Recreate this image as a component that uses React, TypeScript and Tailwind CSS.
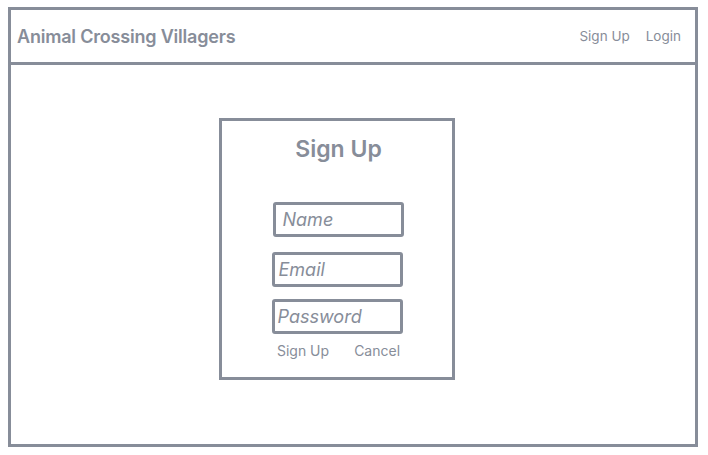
const Field = ({ label, offset }: { label: string; offset: string }) => (
    <div className={`w-[131px] h-[35px] border-[3px] border-[#878d99] rounded-[3px] flex items-center ${offset}`}>
        <span className="italic text-[18px] leading-none text-[#878d99]">{label}</span>
    </div>
);

export default function App() {
    return (
        <div className="w-[708px] h-[455px] bg-white pt-[7px] pl-[8px] font-['Inter',sans-serif] text-[#878d99]">
            <div className="w-[690px] h-[440px] border-[3px] border-[#878d99] flex flex-col">
                {/* Header */}
                <header className="h-[55px] border-b-[3px] border-[#878d99] flex items-center justify-between pl-[6px] pr-[14px]">
                    <h1 className="text-[18px] font-semibold tracking-[-0.2px]">Animal Crossing Villagers</h1>
                    <nav className="flex gap-[16px] text-[13.5px]">
                        <a href="#">Sign Up</a>
                        <a href="#">Login</a>
                    </nav>
                </header>

                {/* Sign up card */}
                <main className="flex-1 pt-[53px] pl-[208px]">
                    <div className="w-[236px] h-[262px] border-[3px] border-[#878d99] flex flex-col items-center">
                        <h2 className="mt-[12px] text-[23px] leading-[32px] font-semibold pl-[3px]">Sign Up</h2>
                        <div className="mt-[37px] flex flex-col items-center">
                            <Field label="Name" offset="pl-[7px] ml-[2px]" />
                            <div className="h-[15px]" />
                            <Field label="Email" offset="pl-[4px]" />
                            <div className="h-[12px]" />
                            <Field label="Password" offset="pl-[3px]" />
                        </div>
                        <div className="mt-[7px] pl-[3px] flex gap-[25px] text-[14px] leading-[20px]">
                            <button>Sign Up</button>
                            <button>Cancel</button>
                        </div>
                    </div>
                </main>
            </div>
        </div>
    );
}
